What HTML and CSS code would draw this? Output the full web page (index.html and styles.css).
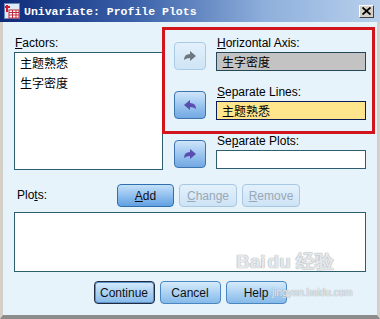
FILE: index.html
```html
<!DOCTYPE html>
<html>
<head>
<meta charset="utf-8">
<link rel="stylesheet" href="styles.css">
</head>
<body>
<div class="window">
  <div class="titlebar">
    <svg class="app-icon" width="16" height="16" viewBox="0 0 16 16">
      <rect x="0.5" y="0.5" width="15" height="15" fill="#dfe9f7" stroke="#6d86b8"/>
      <rect x="5" y="7" width="10" height="8" fill="#ffffff" stroke="#c0283a" stroke-width="1"/>
      <path d="M5 9.5H15M5 12H15M8.5 7V15M12 7V15" stroke="#c0283a" stroke-width="1"/>
      <path d="M3 2V9M1 4H6" stroke="#d11a2a" stroke-width="2"/>
    </svg>
    <span class="title">Univariate: Profile Plots</span>
    <span class="close">
      <svg width="9" height="8" viewBox="0 0 9 8"><path d="M0.5 0.5L8.5 7.5M8.5 0.5L0.5 7.5" stroke="#000" stroke-width="1.8"/></svg>
    </span>
  </div>
  <div class="content">
    <div class="top">
      <div class="factors">
        <div class="label"><u>F</u>actors:</div>
        <div class="listbox tall">
          <div class="item">主题熟悉</div>
          <div class="item">生字密度</div>
        </div>
      </div>
      <div class="targets">
        <div class="row">
          <span class="arrow disabled">
            <svg width="14" height="12" viewBox="0 0 14 12"><path d="M1 10Q1 4 7 4L7 1L13 6L7 11L7 8Q3.5 8 1 10Z" fill="#6e7780"/></svg>
          </span>
          <div class="field-col">
            <div class="label"><u>H</u>orizontal Axis:</div>
            <div class="field gray">生字密度</div>
          </div>
        </div>
        <div class="row">
          <span class="arrow">
            <svg width="14" height="12" viewBox="0 0 14 12"><path d="M13 10Q13 4 7 4L7 1L1 6L7 11L7 8Q10.5 8 13 10Z" fill="#5a4fb0"/></svg>
          </span>
          <div class="field-col">
            <div class="label"><u>S</u>eparate Lines:</div>
            <div class="field yellow">主题熟悉</div>
          </div>
        </div>
        <div class="row">
          <span class="arrow">
            <svg width="14" height="12" viewBox="0 0 14 12"><path d="M1 10Q1 4 7 4L7 1L13 6L7 11L7 8Q3.5 8 1 10Z" fill="#5a4fb0"/></svg>
          </span>
          <div class="field-col">
            <div class="label">Se<u>p</u>arate Plots:</div>
            <div class="field white"></div>
          </div>
        </div>
      </div>
    </div>
    <div class="plots-row">
      <div class="label plots-label">Plo<u>t</u>s:</div>
      <span class="btn add"><u>A</u>dd</span>
      <span class="btn disabled"><u>C</u>hange</span>
      <span class="btn disabled"><u>R</u>emove</span>
    </div>
    <div class="listbox plots-box"></div>
    <div class="footer">
      <span class="btn big default">Continue</span>
      <span class="btn big">Cancel</span>
      <span class="btn big">Help</span>
    </div>
  </div>
  <div class="highlight"></div>
  <div class="wm-logo">Bai<span class="wm-du">du</span> 经验</div>
  <div class="wm-url">jingyan.baidu.com</div>
</div>
</body>
</html>
```
FILE: styles.css
```css
* { box-sizing: border-box; }
body {
  margin: 0;
  font-family: "Liberation Sans", Arial, sans-serif;
  font-size: 12px;
  color: #000;
  background: #fff;
}
.window {
  position: relative;
  width: 380px;
  height: 319px;
  display: flex;
  flex-direction: column;
  background: #e7f3fb;
  overflow: hidden;
}
.titlebar {
  height: 22px;
  flex: none;
  display: flex;
  align-items: center;
  padding: 0 6px 0 4px;
  background: linear-gradient(to right, #0d2a78 0%, #3a60a8 35%, #8fb0dc 70%, #b8d0ec 100%);
}
.app-icon { flex: none; }
.title {
  margin-left: 4px;
  font-family: "Liberation Mono", "Courier New", monospace;
  font-weight: bold;
  font-size: 11.5px;
  color: #fff;
  flex: 1;
}
.close {
  width: 15px;
  height: 13px;
  background: #d4d0c8;
  border: 1px solid;
  border-color: #fff #404040 #404040 #fff;
  display: flex;
  align-items: center;
  justify-content: center;
}
.content {
  flex: 1;
  display: flex;
  flex-direction: column;
  border-left: 3px solid #d4d0c8;
  border-right: 3px solid #d4d0c8;
  border-bottom: 4px solid #8c8c8c;
  padding: 15px 0 0 11px;
}
.label {
  height: 15px;
  line-height: 13px;
  white-space: nowrap;
}
.top {
  display: flex;
}
.factors {
  width: 149px;
  flex: none;
}
.factors .label { padding-left: 1px; }
.listbox {
  background: #fff;
  border: 1px solid #2d5d6f;
}
.tall {
  height: 118px;
  padding: 0 0 0 5px;
}
.item {
  font-family: "Noto Sans CJK SC", sans-serif;
  font-size: 12px;
  height: 20px;
  line-height: 20px;
}
.targets {
  margin-left: 11px;
  display: flex;
  flex-direction: column;
  gap: 15px;
}
.row {
  display: flex;
  align-items: flex-end;
  gap: 10px;
}
.arrow {
  width: 32px;
  height: 28px;
  margin-bottom: 1px;
  border-radius: 4px;
  border: 1px solid #3d74ad;
  background: linear-gradient(to bottom, #cfe5fa 0%, #9cc6f0 50%, #72a8e2 100%);
  display: flex;
  align-items: center;
  justify-content: center;
}
.arrow.disabled {
  border-color: #a9cbe6;
  background: linear-gradient(to bottom, #e2f0fb, #cfe4f6);
}
.field-col {
  width: 150px;
}
.field-col .label { padding-left: 1px; }
.field {
  height: 19px;
  line-height: 17px;
  padding-left: 5px;
  font-family: "Noto Sans CJK SC", sans-serif;
  font-size: 12px;
  border: 1px solid #2d5d6f;
}
.field.gray { background: #c3c3c3; border-color: #24485a; }
.field.yellow { background: #ffe58c; border-color: #0c1a58; }
.field.white { background: #fff; }
.plots-row {
  margin-top: 14px;
  display: flex;
  align-items: center;
  gap: 5px;
}
.plots-label {
  width: 98px;
  padding-left: 3px;
  line-height: 15px;
}
.btn {
  width: 57px;
  height: 23px;
  border-radius: 4px;
  border: 1px solid #4a86c0;
  background: linear-gradient(to bottom, #d6ebfb 0%, #a8cff2 55%, #86baea 100%);
  display: flex;
  align-items: center;
  justify-content: center;
  color: #111;
}
.btn.add {
  border-color: #2f6fae;
  background: linear-gradient(to bottom, #c4e0f9 0%, #8cbdef 55%, #62a0e0 100%);
}
.btn.disabled {
  width: 58px;
  border-color: #a6c8e4;
  background: linear-gradient(to bottom, #e4f1fc, #cde3f5);
  color: #98a8b8;
}
.plots-box {
  margin-top: 5px;
  width: 352px;
  height: 60px;
}
.footer {
  margin-top: 9px;
  margin-left: -11px;
  display: flex;
  justify-content: center;
  gap: 5px;
}
.btn.big {
  width: 61px;
  height: 23px;
  font-size: 12px;
}
.btn.default {
  border: 1px solid #1e2c44;
  box-shadow: inset 0 0 0 1px #5f92c8;
}
.highlight {
  position: absolute;
  left: 162px;
  top: 27px;
  width: 213px;
  height: 107px;
  border: 3px solid #d2141c;
  pointer-events: none;
}
.wm-logo {
  position: absolute;
  left: 236px;
  top: 250px;
  font-family: "Liberation Sans", Arial, sans-serif;
  font-weight: bold;
  font-size: 19px;
  line-height: 24px;
  color: rgba(255, 255, 255, 0.75);
  text-shadow: 0 0 1px #9aa4ad, 0 0 1px #9aa4ad;
  pointer-events: none;
}
.wm-du { margin-left: 2px; }
.wm-url {
  position: absolute;
  left: 272px;
  top: 287px;
  font-family: "Liberation Sans", Arial, sans-serif;
  font-size: 10px;
  line-height: 12px;
  color: rgba(255, 255, 255, 0.8);
  text-shadow: 0 0 1px #9aa4ad, 0 0 1px #9aa4ad;
  pointer-events: none;
}
```
